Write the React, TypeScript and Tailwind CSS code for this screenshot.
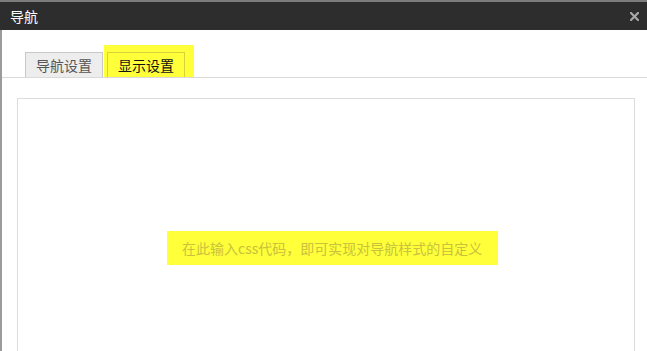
import React from "react";

const FONT = { fontFamily: '"Noto Sans CJK SC", "Liberation Sans", sans-serif' };

function CloseIcon() {
  return (
    <svg width="9" height="9" viewBox="0 0 9 9" className="text-[#a8a8a8]">
      <path d="M1 1 L8 8 M8 1 L1 8" stroke="currentColor" strokeWidth="2.2" strokeLinecap="square" />
    </svg>
  );
}

export default function App() {
  return (
    <div className="w-[647px] h-[351px] overflow-hidden bg-white flex flex-col" style={FONT}>
      {/* page behind the dialog */}
      <div className="h-[2px] bg-[#7c7c7c] shrink-0" />

      {/* Title bar */}
      <div className="h-[28px] shrink-0 bg-[#2d2d2d] flex items-center justify-between pl-[10px] pr-[8px]">
        <span className="text-white text-[14px] leading-none">导航</span>
        <CloseIcon />
      </div>

      <div className="flex flex-1 min-h-0">
        <div className="w-[2px] bg-[#9b9b9b] shrink-0" />
        <div className="flex-1 flex flex-col min-w-0">
          {/* Tabs */}
          <div className="h-[48px] shrink-0 flex items-end pl-[23px] border-b border-[#d9d9d9]">
            <div className="w-[78px] h-[25px] border border-b-0 border-[#c8c8c8] bg-[#ededed] text-[#555] text-[14px] flex items-center justify-center">
              导航设置
            </div>
            <div className="bg-[#ffff3a] pl-[3px] pr-[9px] pt-[7px] ml-[1px]">
              <div className="w-[78px] h-[25px] border border-b-0 border-[#d8d23a] text-[#111] text-[14px] flex items-center justify-center">
                显示设置
              </div>
            </div>
          </div>

          {/* CSS editor area */}
          <div className="flex-1 pt-[20px] pl-[15px] pr-[12px]">
            <div className="h-full border border-b-0 border-[#dcdcdc] pt-[132px] pl-[149px]">
              <div className="inline-flex items-center h-[34px] w-[331px] pl-[15px] bg-[#ffff3a] text-[#c9c23c] text-[14px] whitespace-nowrap">
                在此输入css代码，即可实现对导航样式的自定义
              </div>
            </div>
          </div>
        </div>
      </div>
    </div>
  );
}
